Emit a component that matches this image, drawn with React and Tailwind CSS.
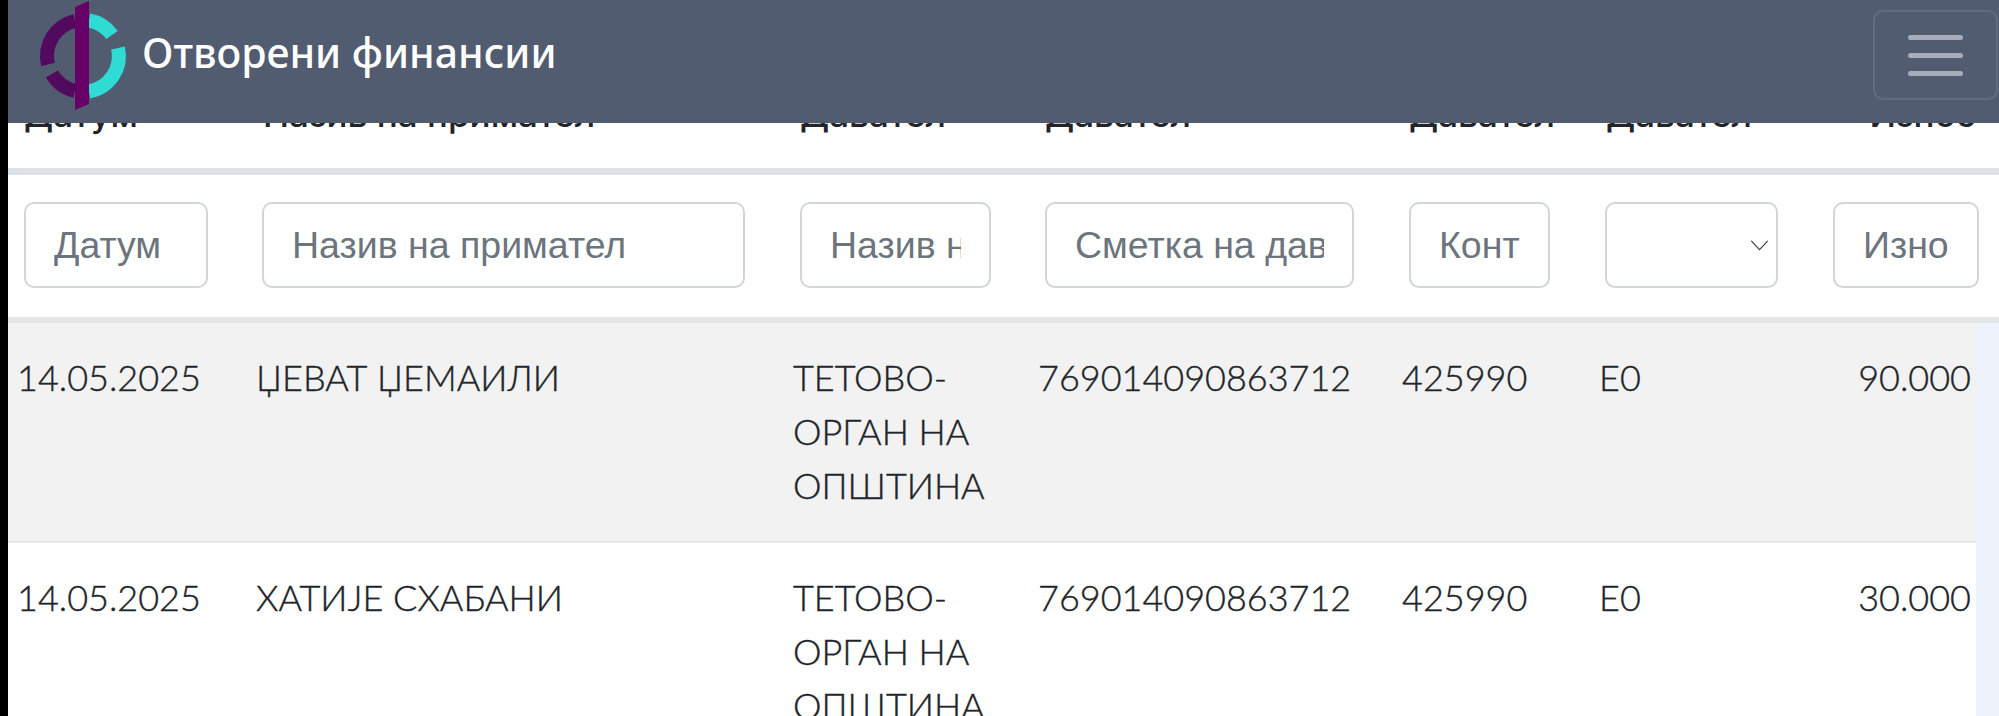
import React from "react";

const columns = [
  { width: "w-[239px]", head: "Датум" },
  { width: "w-[537px]", head: "Назив на примател" },
  { width: "w-[245px]", head: "Давател" },
  { width: "w-[364px]", head: "Давател" },
  { width: "w-[197px]", head: "Давател" },
  { width: "w-[228px]", head: "Давател" },
  { width: "w-[158px]", head: "Износ" },
];

const rows = [
  { date: "14.05.2025", name: "ЏЕВАТ ЏЕМАИЛИ", amount: "90.000", bg: "bg-[#f2f2f2]" },
  { date: "14.05.2025", name: "ХАТИЈЕ СХАБАНИ", amount: "30.000", bg: "bg-white" },
];

const inputClass =
  "block h-[86px] rounded-[10px] border-2 border-[#d3d6d9] bg-white px-[28px] text-[37.5px] leading-[54px] outline-none placeholder:text-[#6c757d]";

function Logo() {
  return (
    <svg viewBox="8 0 134 123" className="h-[123px] w-[134px] shrink-0" aria-hidden="true">
      <g fill="none" strokeWidth="14">
        <path d="M75 21A36 36 0 0 0 48 64.5" stroke="#520a5e" />
        <path d="M52 74A36 36 0 0 0 75 91" stroke="#520a5e" />
        <path d="M89 20.5A36 36 0 0 1 112 35" stroke="#2fdcd3" />
        <path d="M118 48A36 36 0 0 1 89 91.5" stroke="#2fdcd3" />
      </g>
      <path d="M75 7L89 1V104L75 110Z" fill="#660066" />
    </svg>
  );
}

function Cell({ children, right }) {
  return (
    <td className={`border-b-2 border-[#e9e9e9] pl-[9px] pt-[27px] pb-[29px] align-top ${right ? "pr-[5px] text-right" : "pr-0"}`}>
      {children}
    </td>
  );
}

export default function App() {
  return (
    <div className="flex h-[716px] w-[1999px] overflow-hidden bg-black">
      <div className="w-2 shrink-0" />
      <div className="flex min-w-0 flex-1 flex-col bg-white">
        <header className="relative z-10 flex h-[123px] shrink-0 items-start justify-between bg-[#515c70] pr-px">
          <div className="flex items-start">
            <Logo />
            <span className="mt-[23px] text-[41px] font-medium leading-[58px] text-white [font-family:'Noto_Sans',sans-serif]">
              Отворени финансии
            </span>
          </div>
          <button className="mt-[10px] flex h-[90px] w-[125px] flex-col items-center justify-center gap-[13px] rounded-[10px] border-2 border-[#626c7f]">
            <span className="h-[5px] w-[55px] rounded-full bg-[#a7adb9]" />
            <span className="h-[5px] w-[55px] rounded-full bg-[#a7adb9]" />
            <span className="h-[5px] w-[55px] rounded-full bg-[#a7adb9]" />
          </button>
        </header>

        <div className="-mt-[36px]">
          <table className="w-[1991px] table-fixed border-collapse text-[36px] leading-[54px] text-[#212529] [font-family:'Liberation_Sans',sans-serif]">
            <colgroup>
              {columns.map((c, i) => (
                <col key={i} className={c.width} />
              ))}
              <col className="w-[23px]" />
            </colgroup>
            <thead>
              <tr>
                {columns.map((c, i) => (
                  <th
                    key={i}
                    className={`overflow-hidden whitespace-nowrap border-b-[7px] border-[#dee2e6] pb-[27px] text-[35px] font-medium [font-family:'Inter',sans-serif] ${
                      i === 6 ? "text-right" : "pl-[16px] text-left"
                    }`}
                  >
                    {c.head}
                  </th>
                ))}
                <th className="border-b-[7px] border-[#dee2e6]" />
              </tr>
              <tr>
                <th className="border-b-[6px] border-[#e3e5e8] pl-[16px] pt-[27px] pb-[29px] font-normal">
                  <input className={`${inputClass} w-[184px]`} placeholder="Датум" />
                </th>
                <th className="border-b-[6px] border-[#e3e5e8] pl-[15px] pt-[27px] pb-[29px] font-normal">
                  <input className={`${inputClass} w-[483px]`} placeholder="Назив на примател" />
                </th>
                <th className="border-b-[6px] border-[#e3e5e8] pl-[16px] pt-[27px] pb-[29px] font-normal">
                  <input className={`${inputClass} w-[191px]`} placeholder="Назив на давател" />
                </th>
                <th className="border-b-[6px] border-[#e3e5e8] pl-[16px] pt-[27px] pb-[29px] font-normal">
                  <input className={`${inputClass} w-[309px]`} placeholder="Сметка на давател" />
                </th>
                <th className="border-b-[6px] border-[#e3e5e8] pl-[16px] pt-[27px] pb-[29px] font-normal">
                  <input className={`${inputClass} w-[141px]`} placeholder="Конто" />
                </th>
                <th className="border-b-[6px] border-[#e3e5e8] pl-[15px] pt-[27px] pb-[29px] font-normal">
                  <div className="relative h-[86px] w-[173px]">
                    <select className="block h-[86px] w-full appearance-none rounded-[10px] border-2 border-[#d3d6d9] bg-white outline-none" />
                    <svg viewBox="0 0 20 12" className="pointer-events-none absolute right-[9px] top-[38px] h-[11px] w-[19px]" aria-hidden="true">
                      <path d="M1 1L10 10.5L19 1" fill="none" stroke="#343a40" strokeWidth="1.2" />
                    </svg>
                  </div>
                </th>
                <th className="border-b-[6px] border-[#e3e5e8] pl-[15px] pt-[27px] pb-[29px] font-normal">
                  <input className={`${inputClass} w-[146px]`} placeholder="Износ" />
                </th>
                <th className="border-b-[6px] border-[#e3e5e8]" />
              </tr>
            </thead>
            <tbody className="font-light [font-family:'Lato',sans-serif] [-webkit-text-stroke:0.4px_#212529]">
              {rows.map((r, i) => (
                <tr key={i} className={r.bg}>
                  <Cell>{r.date}</Cell>
                  <Cell>{r.name}</Cell>
                  <Cell>ТЕТОВО-ОРГАН НА ОПШТИНА</Cell>
                  <Cell>769014090863712</Cell>
                  <Cell>425990</Cell>
                  <Cell>E0</Cell>
                  <Cell right>{r.amount}</Cell>
                  <td className="bg-[#eef2fa]" />
                </tr>
              ))}
            </tbody>
          </table>
        </div>
      </div>
    </div>
  );
}
